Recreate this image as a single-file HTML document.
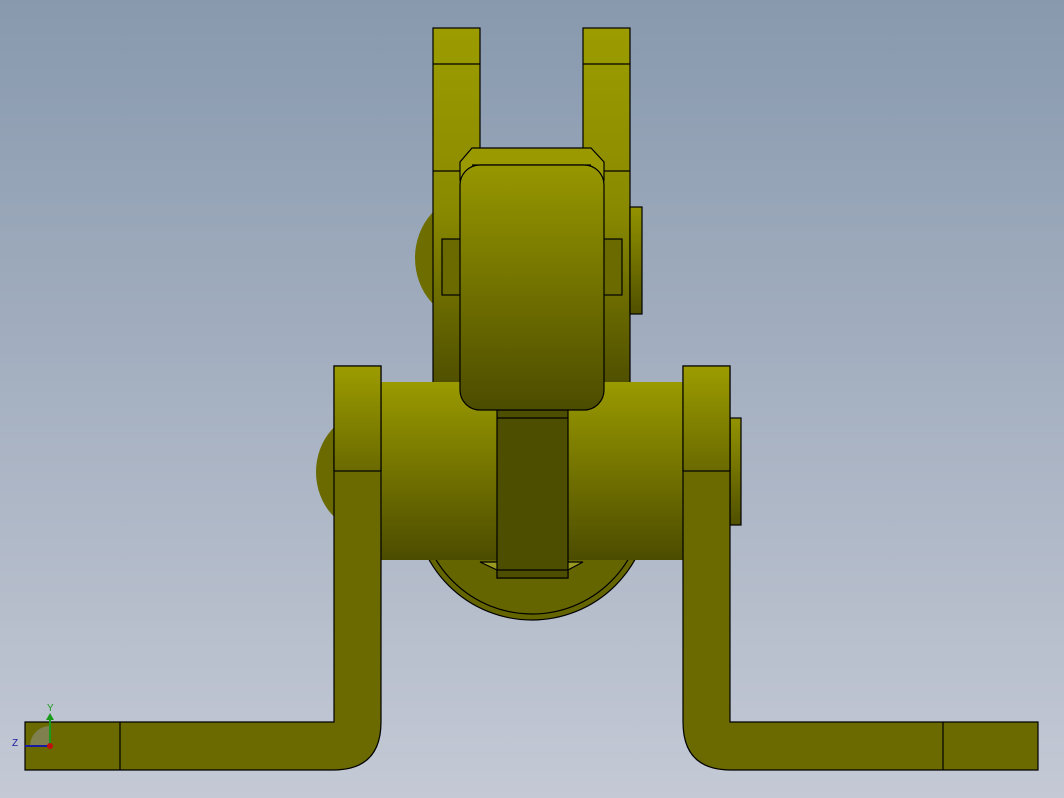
<!DOCTYPE html>
<html><head><style>html,body{margin:0;padding:0;overflow:hidden}svg{display:block}</style></head><body>
<svg width="1064" height="798" viewBox="0 0 1064 798" xmlns="http://www.w3.org/2000/svg">
<defs>
<linearGradient id="bg" x1="0" y1="0" x2="0" y2="1"><stop offset="0" stop-color="#8899ae"/><stop offset="1" stop-color="#c4c9d5"/></linearGradient>
<linearGradient id="post" x1="0" y1="0" x2="0" y2="1"><stop offset="0" stop-color="#9c9c00"/><stop offset="0.5" stop-color="#8a8a00"/><stop offset="1" stop-color="#4e4e00"/></linearGradient>
<linearGradient id="card" x1="0" y1="0" x2="0" y2="1"><stop offset="0" stop-color="#979700"/><stop offset="1" stop-color="#4c4c00"/></linearGradient>
<linearGradient id="cyl" x1="0" y1="0" x2="0" y2="1"><stop offset="0" stop-color="#9a9a00"/><stop offset="1" stop-color="#4c4c00"/></linearGradient>
<linearGradient id="side" x1="0" y1="0" x2="0" y2="1"><stop offset="0" stop-color="#9c9c00"/><stop offset="1" stop-color="#6a6a00"/></linearGradient>
<linearGradient id="boss" x1="0" y1="0" x2="0" y2="1"><stop offset="0" stop-color="#939300"/><stop offset="1" stop-color="#505000"/></linearGradient>
</defs>
<rect width="1064" height="798" fill="url(#bg)"/>
<g stroke="#000" stroke-width="1.2">
<ellipse cx="470" cy="258" rx="55" ry="62" fill="#6e6e00" stroke="none"/>
<circle cx="532" cy="502" r="118" fill="#656500"/>
<circle cx="532" cy="502" r="112" fill="#656500"/>
<rect x="433" y="28" width="47" height="360" fill="url(#post)"/>
<rect x="583" y="28" width="47" height="360" fill="url(#post)"/>
<line x1="433" y1="64" x2="480" y2="64"/><line x1="583" y1="64" x2="630" y2="64"/>
<line x1="433" y1="171" x2="480" y2="171"/><line x1="583" y1="171" x2="630" y2="171"/>
<rect x="630" y="207" width="12" height="107" fill="url(#boss)"/>
<rect x="442" y="239" width="20" height="56" fill="#6a6a00"/>
<rect x="602" y="239" width="20" height="56" fill="#6a6a00"/>
<ellipse cx="370" cy="472" rx="54" ry="60" fill="#6a6a00" stroke="none"/>
<!-- cylinder -->
<rect x="381" y="382" width="302" height="178" fill="url(#cyl)" stroke="none"/>
<path d="M480 562 L497 570 V578 H568 V570 L583 562 Z" fill="#9a9a20"/>
<rect x="497" y="410" width="71" height="168" fill="#4e4e00"/>
<line x1="497" y1="418" x2="568" y2="418"/><line x1="497" y1="570" x2="568" y2="570"/>
<!-- cap -->
<path d="M472 148 H591 L604 162 V180 H460 V162 Z" fill="#9a9a00"/>
<line x1="472" y1="165" x2="591" y2="165"/>
<!-- card (in front) -->
<rect x="460" y="165" width="144" height="245" rx="20" fill="url(#card)"/>
<rect x="730" y="418" width="11" height="107" fill="url(#boss)"/>
<path d="M334 366 H381 V722 Q381 770 333 770 H25 V722 H334 Z" fill="#6a6a00"/>
<rect x="334" y="366" width="47" height="105" fill="url(#side)"/>
<line x1="120" y1="722" x2="120" y2="770"/>
<path d="M730 366 H683 V722 Q683 770 731 770 H1038 V722 H730 Z" fill="#6a6a00"/>
<rect x="683" y="366" width="47" height="105" fill="url(#side)"/>
<line x1="943" y1="722" x2="943" y2="770"/>
</g>
<g font-family="Liberation Sans, sans-serif" font-size="10">
<path d="M30 746 A20 20 0 0 1 50 726 V746 Z" fill="#8a8a70" opacity="0.7"/>
<line x1="50" y1="746" x2="50" y2="718" stroke="#1a9a1a" stroke-width="2"/>
<polygon points="46,720 54,720 50,713" fill="#1a9a1a"/>
<line x1="50" y1="746" x2="25" y2="746" stroke="#1a1aa0" stroke-width="2"/>
<circle cx="50" cy="746" r="3" fill="#c01010"/>
<text x="47" y="711" fill="#1a9a1a">Y</text>
<text x="12" y="746" fill="#1a1aa0">Z</text>
</g>
</svg>
</body></html>
